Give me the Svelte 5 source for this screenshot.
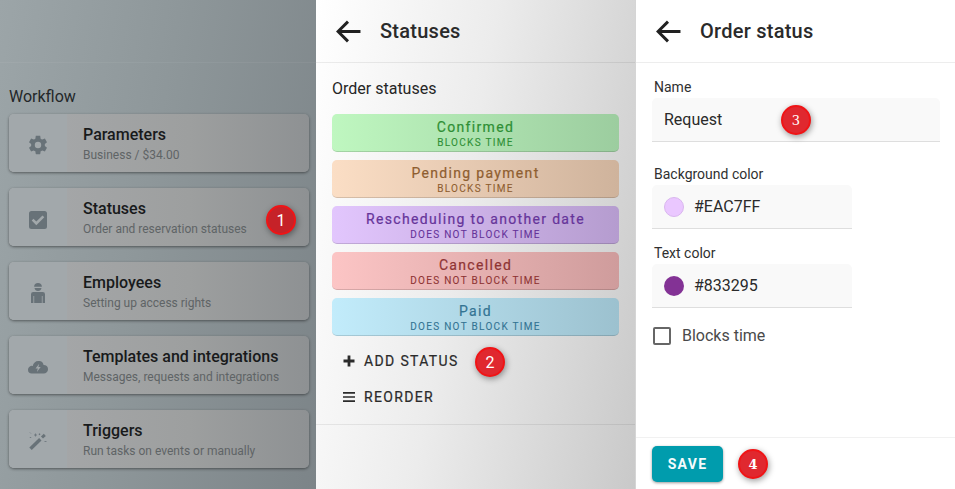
<script>
  const cards = [
    { title: "Parameters", sub: "Business / $34.00", icon: "gear" },
    { title: "Statuses", sub: "Order and reservation statuses", icon: "check", marker: "1" },
    { title: "Employees", sub: "Setting up access rights", icon: "person" },
    { title: "Templates and integrations", sub: "Messages, requests and integrations", icon: "cloud" },
    { title: "Triggers", sub: "Run tasks on events or manually", icon: "wand" }
  ];

  const statuses = [
    { name: "Confirmed", note: "Blocks time", kind: "green" },
    { name: "Pending payment", note: "Blocks time", kind: "orange" },
    { name: "Rescheduling to another date", note: "Does not block time", kind: "purple" },
    { name: "Cancelled", note: "Does not block time", kind: "red" },
    { name: "Paid", note: "Does not block time", kind: "blue" }
  ];
</script>

{#snippet back()}
  <svg class="back" viewBox="0 0 24 24" aria-hidden="true">
    <path d="M23.500 12H2.500M11.500 2.500 2 12l9.500 9.500" fill="none" stroke="currentColor" stroke-width="2.800" />
  </svg>
{/snippet}

<div class="page">
  <section class="panel menu">
    <header class="head"></header>
    <p class="group">Workflow</p>
    <div class="cards">
      {#each cards as card (card.title)}
        <div class="card">
          <div class="icon">
            {#if card.icon === "gear"}
              <svg class="gear" viewBox="0 0 24 24"><path d="M12,15.5A3.5,3.5 0 0,1 8.5,12A3.5,3.5 0 0,1 12,8.5A3.5,3.5 0 0,1 15.5,12A3.5,3.5 0 0,1 12,15.5M19.43,12.97C19.47,12.65 19.5,12.33 19.5,12C19.5,11.67 19.47,11.34 19.43,11L21.54,9.37C21.73,9.22 21.78,8.95 21.66,8.73L19.66,5.27C19.54,5.05 19.27,4.96 19.05,5.05L16.56,6.05C16.04,5.66 15.5,5.32 14.87,5.07L14.5,2.42C14.46,2.18 14.25,2 14,2H10C9.75,2 9.54,2.18 9.5,2.42L9.13,5.07C8.5,5.32 7.96,5.66 7.44,6.05L4.95,5.05C4.73,4.96 4.46,5.05 4.34,5.27L2.34,8.73C2.21,8.95 2.27,9.22 2.46,9.37L4.57,11C4.53,11.34 4.5,11.67 4.5,12C4.5,12.33 4.53,12.65 4.57,12.97L2.46,14.63C2.27,14.78 2.21,15.05 2.34,15.27L4.34,18.73C4.46,18.95 4.73,19.03 4.95,18.95L7.44,17.94C7.96,18.34 8.5,18.68 9.13,18.93L9.5,21.58C9.54,21.82 9.75,22 10,22H14C14.25,22 14.46,21.82 14.5,21.58L14.87,18.93C15.5,18.67 16.04,18.34 16.56,17.94L19.05,18.95C19.27,19.03 19.54,18.95 19.66,18.73L21.66,15.27C21.78,15.05 21.73,14.78 21.54,14.63L19.43,12.97Z" /></svg>
            {:else if card.icon === "check"}
              <svg class="check" viewBox="0 0 18 18"><path fill-rule="evenodd" d="M2.500 0h13A2.500 2.500 0 0 1 18 2.500v13a2.500 2.500 0 0 1-2.500 2.500h-13A2.500 2.500 0 0 1 0 15.500v-13A2.500 2.500 0 0 1 2.500 0ZM7.300 14.200 15.300 6.200 13.500 4.400 7.300 10.600 4.500 7.800 2.700 9.600Z" /></svg>
            {:else if card.icon === "person"}
              <svg class="person" viewBox="0 0 14 20"><path fill-rule="evenodd" d="M7 0a3.900 3.900 0 0 1 3.900 3.700H3.100A3.900 3.900 0 0 1 7 0ZM3.500 5h7A3.700 3.700 0 0 1 7 8 3.700 3.700 0 0 1 3.500 5ZM2.200 9h9.600A2.200 2.200 0 0 1 14 11.200V20h-2.400v-7h-.8v7H3.200v-7h-.8v7H0v-8.800A2.200 2.200 0 0 1 2.200 9Z" /></svg>
            {:else if card.icon === "cloud"}
              <svg class="cloud" viewBox="0 0 20 13"><path fill-rule="evenodd" d="M10.500 0A5 5 0 0 1 15.600 3.900 4.200 4.200 0 0 1 20 8.200 4.300 4.300 0 0 1 15.700 12.500H3.800A3.800 3.800 0 0 1 0 8.700 3.800 3.800 0 0 1 4.800 5 5.600 5.600 0 0 1 10.500 0ZM11.200 2.800 7.500 7.600h2.300l-.9 3.300 3.800-4.800H10.400Z" /></svg>
            {:else}
              <svg class="wand" viewBox="0 0 18 18"><path d="M1.500 16.800 11.300 7.200" fill="none" stroke="currentColor" stroke-width="3.400" /><path d="M13 5.500 15.800 2.800" fill="none" stroke="currentColor" stroke-width="3" /><path d="M6.500 1.500v3M5 3h3M10.500 1.500v1.600M9.700 2.300h1.600M1 .6l.8.8M15.500 9.500h2M.8 5.500h1.400" fill="none" stroke="currentColor" stroke-width=".8" /></svg>
            {/if}
          </div>
          <div class="copy">
            <strong>{card.title}</strong>
            <span>{card.sub}</span>
          </div>
          {#if card.marker}<b class="marker in-card">{card.marker}</b>{/if}
        </div>
      {/each}
    </div>
  </section>

  <section class="panel list">
    <header class="head">{@render back()}<h2>Statuses</h2></header>
    <div class="list-body">
      <p class="list-title">Order statuses</p>
      <div class="statuses">
        {#each statuses as status (status.name)}
          <div class="status {status.kind}">
            <span class="status-name">{status.name}</span>
            <span class="status-note">{status.note}</span>
          </div>
        {/each}
      </div>
      <div class="action first">
        <svg viewBox="0 0 12 12"><path d="M6 .5v11M.5 6h11" fill="none" stroke="currentColor" stroke-width="2.800" /></svg>
        <span>Add status</span>
        <b class="marker two">2</b>
      </div>
      <div class="action">
        <svg viewBox="0 0 12 12"><path d="M0 1.800h12M0 6h12M0 10.200h12" fill="none" stroke="currentColor" stroke-width="1.700" /></svg>
        <span>Reorder</span>
      </div>
    </div>
  </section>

  <section class="panel form">
    <header class="head">{@render back()}<h2>Order status</h2></header>
    <div class="form-body">
      <label class="field-label" for="status-name">Name</label>
      <div class="field wide">
        <input id="status-name" value="Request" />
        <b class="marker three">3</b>
      </div>
      <p class="field-label spaced">Background color</p>
      <div class="field">
        <i class="swatch light"></i>
        <span>#EAC7FF</span>
      </div>
      <p class="field-label spaced small">Text color</p>
      <div class="field">
        <i class="swatch dark"></i>
        <span>#833295</span>
      </div>
      <div class="blocks">
        <i class="box"></i>
        <span>Blocks time</span>
      </div>
    </div>
    <footer class="foot">
      <button type="button">Save</button>
      <b class="marker four">4</b>
    </footer>
  </section>
</div>

<style>
  :global(body) {
    margin: 0;
    background: #fff;
  }

  .page {
    width: 955px;
    height: 489px;
    display: grid;
    grid-template-columns: 316px 320px 319px;
    overflow: hidden;
    font-family: Roboto, "Liberation Sans", sans-serif;
    color: #212121;
  }

  .panel {
    position: relative;
    height: 489px;
    box-sizing: border-box;
    display: flex;
    flex-direction: column;
  }

  .menu {
    background: linear-gradient(100deg, #9ca5a8 0%, #8e979a 45%, #7c8488 100%);
  }

  .list {
    background: linear-gradient(100deg, #ffffff 0%, #ececec 45%, #c9c9c9 100%);
    border-right: 1px solid #d5d5d5;
  }

  .form {
    background: #fff;
  }

  .head {
    height: 62px;
    flex: none;
    display: flex;
    align-items: center;
    gap: 19px;
    padding-left: 20px;
    border-bottom: 1px solid rgba(0, 0, 0, 0.07);
  }

  .menu .head {
    border-bottom-color: rgba(255, 255, 255, 0.05);
  }

  .back {
    width: 25px;
    height: 25px;
    color: #212121;
  }

  h2 {
    margin: 0;
    font-size: 20px;
    font-weight: 500;
    letter-spacing: 0.25px;
    color: #2a2a2a;
  }

  .group {
    margin: 24px 0 8px 9px;
    height: 19px;
    line-height: 19px;
    font-size: 16px;
    color: #232729;
  }

  .cards {
    display: flex;
    flex-direction: column;
    gap: 16px;
    margin: 0 7px 0 9px;
  }

  .card {
    position: relative;
    height: 58px;
    display: flex;
    border-radius: 5px;
    overflow: visible;
    background: linear-gradient(90deg, #a7a9ab 0%, #9d9f9f 60%, #8e9193 100%);
    box-shadow: 0 1px 3px rgba(0, 0, 0, 0.45);
  }

  .icon {
    width: 58px;
    flex: none;
    box-sizing: border-box;
    padding-top: 4px;
    display: grid;
    place-items: center;
    border-radius: 5px 0 0 5px;
    background: #a2a8ab;
    color: #687278;
  }

  .icon svg {
    display: block;
    fill: currentColor;
  }

  .gear {
    width: 22px;
    height: 22px;
  }

  .check {
    width: 18px;
    height: 18px;
    margin-top: 2px;
  }

  .person {
    width: 14px;
    height: 20px;
  }

  .cloud {
    width: 20px;
    height: 13px;
  }

  .wand {
    width: 18px;
    height: 18px;
  }

  .copy {
    display: flex;
    flex-direction: column;
    padding: 11px 0 0 16px;
    white-space: nowrap;
  }

  .copy strong {
    font-size: 16px;
    font-weight: 500;
    line-height: 20px;
    color: #181a1b;
  }

  .copy span {
    margin-top: 1px;
    font-size: 12px;
    line-height: 18px;
    color: #5f6466;
  }

  .list-body {
    flex: none;
    height: 362px;
    box-sizing: border-box;
    position: relative;
    padding: 0 16px;
    border-bottom: 1px solid rgba(0, 0, 0, 0.07);
  }

  .list-title {
    margin: 16px 0 16px;
    font-size: 16px;
    line-height: 19px;
    color: #262626;
  }

  .statuses {
    display: flex;
    flex-direction: column;
    gap: 8px;
  }

  .status {
    height: 38px;
    box-sizing: border-box;
    padding-top: 5px;
    display: flex;
    flex-direction: column;
    align-items: center;
    border-radius: 5px;
    border-bottom: 1px solid rgba(0, 0, 0, 0.14);
    width: 287px;
  }

  .status-name {
    font-size: 14px;
    line-height: 17px;
    font-weight: 400;
    letter-spacing: 1.32px;
    -webkit-text-stroke: 0.2px currentColor;
  }

  .status-note {
    font-size: 10px;
    line-height: 13px;
    font-weight: 400;
    letter-spacing: 1.3px;
    text-transform: uppercase;
    -webkit-text-stroke: 0.1px currentColor;
  }

  .green { background: linear-gradient(90deg, #bff7c0, #9ccd9f); color: #2f8f35; }
  .orange { background: linear-gradient(90deg, #fbdec5, #cfb39c); color: #8f5e30; }
  .purple { background: linear-gradient(90deg, #e2c6fd, #b59ccf); color: #66349a; }
  .red { background: linear-gradient(90deg, #fcc5c5, #cf9c9c); color: #8f3434; }
  .blue { background: linear-gradient(90deg, #c2ecfb, #9cc1cf); color: #347493; }

  .action {
    position: relative;
    height: 36px;
    display: flex;
    align-items: center;
    gap: 9px;
    padding-left: 11px;
    font-size: 14px;
    font-weight: 400;
    letter-spacing: 1.35px;
    text-transform: uppercase;
    color: #2b2b2b;
    -webkit-text-stroke: 0.2px currentColor;
  }

  .action.first {
    margin-top: 7px;
  }

  .action svg {
    width: 12px;
    height: 12px;
  }

  .form-body {
    flex: 1;
    padding: 16px 15px 0 16px;
  }

  .field-label {
    display: block;
    margin: 0 0 0 2px;
    font-size: 14px;
    line-height: 17px;
    height: 19px;
    color: #303030;
  }

  .spaced {
    margin-top: 24px;
  }

  .small {
    margin-top: 16px;
  }

  .field {
    position: relative;
    width: 200px;
    height: 44px;
    box-sizing: border-box;
    display: flex;
    align-items: center;
    gap: 10px;
    padding-left: 12px;
    border-radius: 5px 5px 0 0;
    background: #f9f9f9;
    border-bottom: 1px solid #dedede;
    font-size: 16px;
    color: #2a2a2a;
  }

  .field.wide {
    width: 288px;
  }

  input {
    border: 0;
    outline: 0;
    padding: 0;
    background: none;
    font: inherit;
    color: inherit;
    width: 200px;
  }

  .swatch {
    width: 20px;
    height: 20px;
    box-sizing: border-box;
    border-radius: 50%;
  }

  .swatch.light {
    background: #eac7ff;
    border: 1px solid #d9b6ee;
  }

  .swatch.dark {
    background: #833295;
  }

  .blocks {
    display: flex;
    align-items: center;
    gap: 11px;
    margin: 18px 0 0 1px;
    font-size: 16px;
    color: #4a4a4a;
  }

  .box {
    width: 18px;
    height: 18px;
    box-sizing: border-box;
    border: 2px solid #666;
    border-radius: 2px;
  }

  .foot {
    position: relative;
    height: 52px;
    box-sizing: border-box;
    padding: 8px 16px;
    border-top: 1px solid #f1f1f1;
  }

  button {
    width: 71px;
    height: 36px;
    border: 0;
    border-radius: 5px;
    background: #009cad;
    color: #f4fbfc;
    font-family: inherit;
    font-size: 14px;
    font-weight: 700;
    letter-spacing: 1.3px;
    text-transform: uppercase;
    box-shadow: 0 1px 3px rgba(0, 0, 0, 0.4);
  }

  .marker {
    position: absolute;
    width: 30px;
    height: 30px;
    box-sizing: border-box;
    display: grid;
    place-items: center;
    border: 2px solid #f01416;
    border-radius: 50%;
    background: #e0282f;
    color: #fff;
    font-size: 16px;
    font-weight: 400;
    letter-spacing: 0;
    -webkit-text-stroke: 0;
    box-shadow: 1px 2px 6px rgba(0, 0, 0, 0.4);
    z-index: 2;
  }

  .in-card {
    left: 257px;
    top: 17px;
    background: #c62228;
  }

  .two {
    left: 143px;
    top: 4px;
  }

  .three {
    left: 129px;
    top: 7px;
    font-family: "DejaVu Serif", serif;
    font-size: 13px;
  }

  .four {
    left: 102px;
    top: 11px;
    font-family: "DejaVu Serif", serif;
    font-size: 13px;
    font-weight: 700;
  }
</style>
